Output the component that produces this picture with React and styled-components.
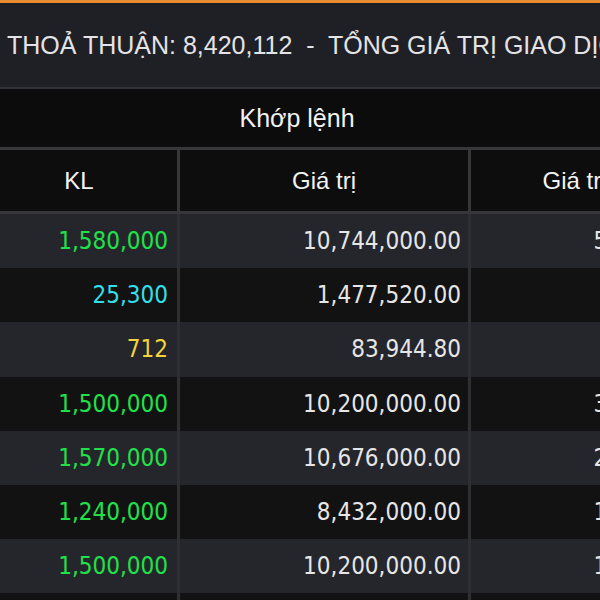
import React from "react";
import styled, { createGlobalStyle } from "styled-components";

const Global = createGlobalStyle`
  html, body { margin: 0; padding: 0; background: #131314; }
  body { width: 600px; height: 600px; overflow: hidden; }
`;

const Page = styled.div`
  width: 600px;
  height: 600px;
  overflow: hidden;
  background: #131314;
  font-family: "Liberation Sans", Arial, sans-serif;
`;

const TopBar = styled.div`
  height: 84px;
  border-top: 3px solid #e98b30;
  border-bottom: 2px solid #323338;
  background: #1f2025;
  display: flex;
  align-items: center;
  padding-left: 7px;
  color: #e4e4e6;
  font-size: 25px;
  white-space: pre;
  overflow: hidden;
`;

const GroupHeader = styled.div`
  height: 58px;
  background: #0c0c0d;
  border-bottom: 3px solid #37373a;
  display: flex;
  align-items: center;
  justify-content: center;
  padding-right: 6px;
  color: #f2f2f2;
  font-size: 25px;
`;

const Grid = styled.div`
  margin-left: -19px;
  width: 720px;
`;

const Row = styled.div`
  display: grid;
  grid-template-columns: 199px 291px 210px;
  height: ${(p) => p.$h}px;
  background: ${(p) => p.$bg};
  border-bottom: ${(p) => (p.$sep ? "3px solid #37373a" : "none")};
`;

const HeadCell = styled.div`
  display: flex;
  align-items: center;
  justify-content: center;
  color: #f2f2f2;
  font-size: 24px;
  border-right: 3px solid #37373a;
  background: #0d0d0e;
`;

const Cell = styled.div`
  display: flex;
  align-items: center;
  justify-content: flex-end;
  padding-right: ${(p) => p.$pr}px;
  font-family: "DejaVu Sans Condensed", "DejaVu Sans", sans-serif;
  font-size: 24px;
  color: ${(p) => p.$color || "#e6e6e6"};
  border-right: 3px solid #2e2f33;
  white-space: nowrap;
  overflow: hidden;
`;

const rows = [
  { kl: "1,580,000", c: "#21e14b", v: "10,744,000.00", x: "53,700" },
  { kl: "25,300", c: "#33dfe8", v: "1,477,520.00", x: "1,740" },
  { kl: "712", c: "#f3d23b", v: "83,944.80", x: "820" },
  { kl: "1,500,000", c: "#21e14b", v: "10,200,000.00", x: "31,500" },
  { kl: "1,570,000", c: "#21e14b", v: "10,676,000.00", x: "26,690" },
  { kl: "1,240,000", c: "#21e14b", v: "8,432,000.00", x: "18,600" },
  { kl: "1,500,000", c: "#21e14b", v: "10,200,000.00", x: "15,300" },
  { kl: "1,500,000", c: "#21e14b", v: "10,200,000.00", x: "15,300" },
];

export default function App() {
  return (
    <Page>
      <Global />
      <TopBar>THOẢ THUẬN: 8,420,112  -  TỔNG GIÁ TRỊ GIAO DỊCH: 2,915,420,000</TopBar>
      <GroupHeader>Khớp lệnh</GroupHeader>
      <Grid>
        <Row $h={61} $bg="#0d0d0e" $sep>
          <HeadCell>KL</HeadCell>
          <HeadCell>Giá trị</HeadCell>
          <HeadCell>Giá trị</HeadCell>
        </Row>
        {rows.map((r, i) => (
          <Row key={i} $h={54.2} $bg={i % 2 === 0 ? "#25262b" : "#121213"}>
            <Cell $pr={9} $color={r.c}>{r.kl}</Cell>
            <Cell $pr={7}>{r.v}</Cell>
            <Cell $pr={9}>{r.x}</Cell>
          </Row>
        ))}
      </Grid>
    </Page>
  );
}
